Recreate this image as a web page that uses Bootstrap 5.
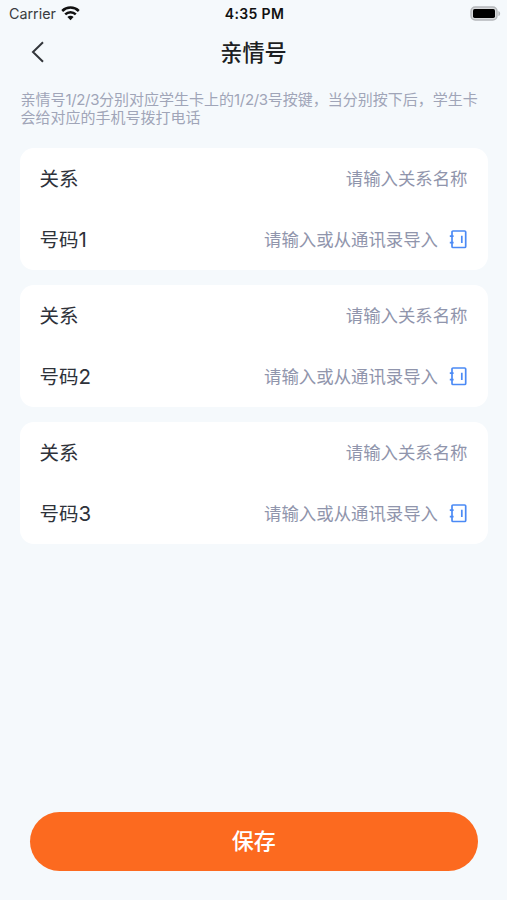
<!DOCTYPE html>
<html lang="zh-CN">
<head>
<meta charset="utf-8">
<meta name="viewport" content="width=device-width, initial-scale=1">
<title>亲情号</title>
<link href="https://cdn.jsdelivr.net/npm/bootstrap@5.3.0/dist/css/bootstrap.min.css" rel="stylesheet">
<style>
  body { background: #f5f9fc; color: #2b2f36; font-family: Inter, "Noto Sans CJK SC", sans-serif; }
  .screen { height: 900px; }
  .status { height: 28px; padding: 0 6px 0 9px; font-size: 14px; line-height: 28px; color: #1c1d20; }
  .status-side { flex: 1 1 0; }
  .carrier { font-size: 14.3px; color: #3a3c40; }
  .clock { font-size: 14px; letter-spacing: .35px; color: #111; margin-right: 1px; }
  .title-bar { height: 48px; padding: 0 30px; }
  .title-bar h1 { font-size: 22.2px; line-height: 48px; padding-top: 1px; font-weight: 500; color: #1d1f23; }
  .title-side { width: 16px; }
  .note { margin: 15px 20.5px 0; font-size: 15px; line-height: 17.5px; color: #a0a5b8; white-space: nowrap; }
  .note-latin { letter-spacing: -.35px; }
  .groups { margin: 22px 19.5px 0; gap: 14.5px; }
  .group-card { border-radius: 14px; height: 122.3px; padding: 0 20px; }
  .field { height: 61.15px; }
  .field-label { font-size: 19.5px; color: #2e323a; padding-top: 2px; }
  .field-digit { font-size: 20.5px; line-height: 1; }
  .field-hint { font-size: 17.4px; color: #9095ac; padding-top: 1px; }
  .book { margin: 0 1px 1px 10.5px; }
  .save { height: 59px; margin: 0 29.5px 29.5px 30px; padding: 1px 0 0; background: #fc6a1f; color: #fff; font-size: 22px; font-weight: 500; }
  .save:hover { background: #f05f15; color: #fff; }
</style>
<script src="https://cdn.jsdelivr.net/npm/bootstrap@5.3.0/dist/js/bootstrap.bundle.min.js" defer></script>
</head>
<body>
<svg class="d-none">
  <symbol id="contacts" viewBox="0 0 18 20">
    <path d="M4 2H15.6a1.1 1.1 0 0 1 1.1 1.1V17.4a1.1 1.1 0 0 1-1.1 1.1H4a1 1 0 0 1-1-1V3a1 1 0 0 1 1-1ZM.8 7.2H4.6M.8 13.7H4.6M12.8 6.8V14" fill="none" stroke="#4b8af5" stroke-width="1.7"/>
  </symbol>
</svg>
<div class="screen d-flex flex-column">
  <div class="status d-flex align-items-center">
    <div class="status-side d-flex align-items-center">
      <span class="carrier">Carrier</span>
      <svg class="ms-1" width="21" height="16" viewBox="0 0 20 16">
        <g fill="none" stroke="#111" stroke-width="2.5"><path d="M1.7 5a11.8 11.8 0 0 1 16.6 0M4.7 8.4a7.6 7.6 0 0 1 10.6 0"/></g>
        <path d="M6.9 11a4.4 4.4 0 0 1 6.2 0L10 14.2Z" fill="#111"/>
      </svg>
    </div>
    <span class="clock fw-semibold">4:35 PM</span>
    <div class="status-side d-flex justify-content-end align-items-center">
      <svg width="31" height="16" viewBox="0 0 31 16">
        <rect x="1" y="1" width="26" height="13" rx="4.2" fill="#d8dadc" stroke="#b4b7ba" stroke-width="1.4"/>
        <rect x="3" y="3.1" width="22" height="8.8" rx="1.6" fill="#000"/>
        <path d="M28.4 4.9c2.3.8 2.3 4.4 0 5.2Z" fill="#b4b7ba"/>
      </svg>
    </div>
  </div>
  <header class="title-bar d-flex align-items-center justify-content-between">
    <svg class="title-side" height="24" viewBox="0 0 16 24"><path d="M13 2.2 3 12l10 9.8" fill="none" stroke="#33363b" stroke-width="2"/></svg>
    <h1 class="m-0">亲情号</h1>
    <span class="title-side"></span>
  </header>
  <p class="note mb-0">亲情号<span class="note-latin">1/2/3</span>分别对应学生卡上的<span class="note-latin">1/2/3</span>号按键，当分别按下后，学生卡<br>会给对应的手机号拨打电话</p>
  <main class="groups d-flex flex-column">
    <section class="group-card bg-white">
      <div class="field d-flex align-items-center justify-content-between"><span class="field-label">关系</span><span class="field-hint">请输入关系名称</span></div>
      <div class="field d-flex align-items-center"><span class="field-label me-auto">号码<span class="field-digit">1</span></span><span class="field-hint">请输入或从通讯录导入</span><svg class="book" width="18" height="20"><use href="#contacts"/></svg></div>
    </section>
    <section class="group-card bg-white">
      <div class="field d-flex align-items-center justify-content-between"><span class="field-label">关系</span><span class="field-hint">请输入关系名称</span></div>
      <div class="field d-flex align-items-center"><span class="field-label me-auto">号码<span class="field-digit">2</span></span><span class="field-hint">请输入或从通讯录导入</span><svg class="book" width="18" height="20"><use href="#contacts"/></svg></div>
    </section>
    <section class="group-card bg-white">
      <div class="field d-flex align-items-center justify-content-between"><span class="field-label">关系</span><span class="field-hint">请输入关系名称</span></div>
      <div class="field d-flex align-items-center"><span class="field-label me-auto">号码<span class="field-digit">3</span></span><span class="field-hint">请输入或从通讯录导入</span><svg class="book" width="18" height="20"><use href="#contacts"/></svg></div>
    </section>
  </main>
  <button type="button" class="save btn rounded-pill border-0 mt-auto">保存</button>
</div>
</body>
</html>
